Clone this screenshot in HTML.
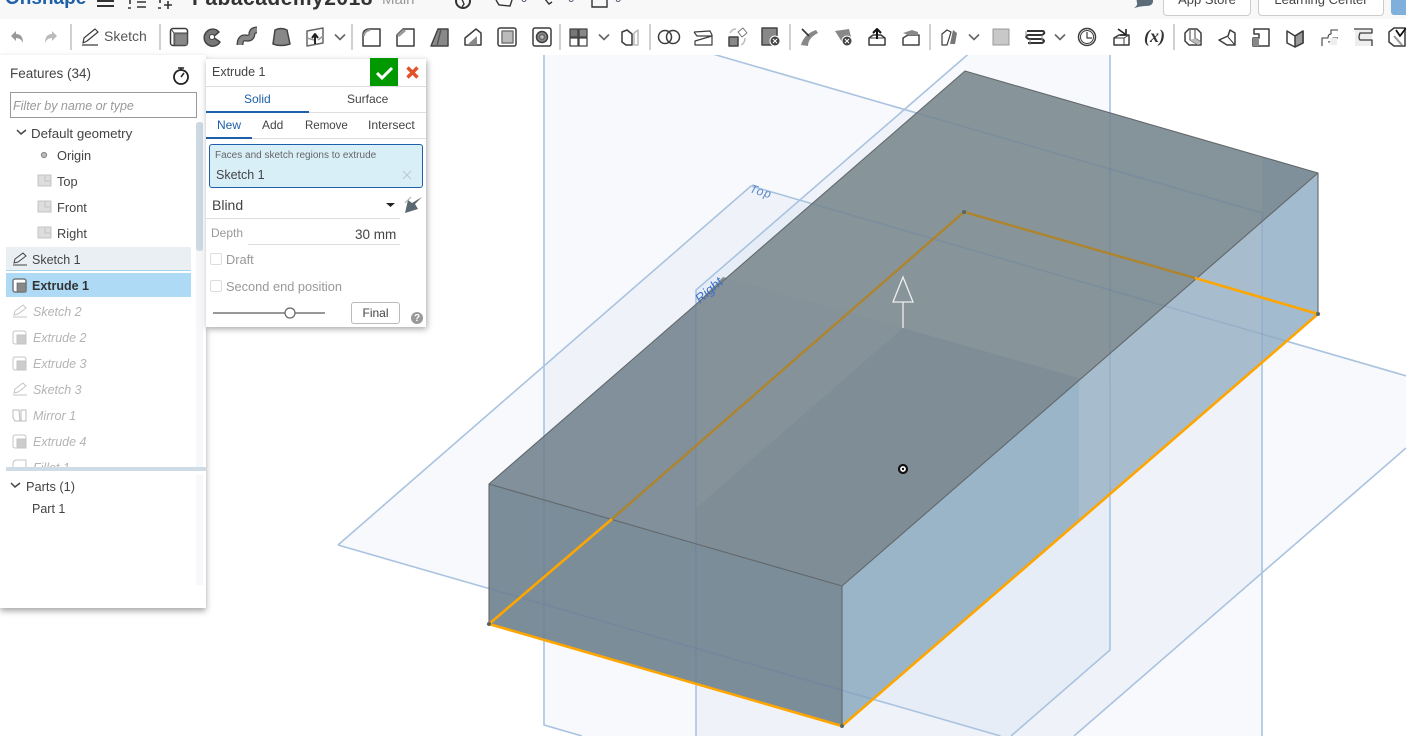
<!DOCTYPE html>
<html><head><meta charset="utf-8"><style>
html,body{margin:0;padding:0;width:1406px;height:736px;overflow:hidden;background:#fff;font-family:"Liberation Sans",sans-serif;color:#444}
#r{position:absolute;left:0;top:0;width:1406px;height:736px;overflow:hidden}
.a{position:absolute;white-space:nowrap;line-height:16px}
.g{color:#b4b4b4;font-style:italic}
svg{position:absolute;left:0;top:0;overflow:hidden}
</style></head><body><div id="r">
<svg width="1406" height="736" viewBox="0 0 1406 736">
<defs>
<clipPath id="box"><path d="M489 484L965 71L1318 173V314L842 726L489 624Z"/></clipPath>
<g id="pe"><path d="M338 545L751 186L1406 375.800M338 545L1000.500 736M1074 736L1406 448"/><path d="M544 50V725L582 736M699 50L1262 213V736"/><path d="M696 736V290L973 50M1110 50V650L1011 736"/></g>
</defs>
<g fill="#6e96c8" fill-opacity=".055">
<path d="M751 186L338 545L1000.500 736H1074L1406 448V375.800Z"/>
<path d="M544 50H699L1262 213V736H582L544 725Z"/>
<path d="M696 290L973 50H1110V650L1011 736H696Z"/>
</g>
<use href="#pe" fill="none" stroke="#a9c3e0" stroke-width="1.600"/>
<path d="M489 484L965 71L1318 173L842 586Z" fill="#87949a"/>
<path d="M489 484L842 586V726L489 624Z" fill="#7c8d9a"/>
<path d="M842 586L1318 173V314L842 726Z" fill="#9ab4c8"/>
<path d="M489 484L696 304V544Z" fill="#81909a"/>
<path d="M696 304L723 277L903 328L696 508Z" fill="#85929a"/>
<path d="M903 328L1079 378V380L842 586L696 544V508Z" fill="#7f8d96"/>
<path d="M1110 113L1262 157V228L1110 353Z" fill="#85939a"/>
<path d="M1262 157L1318 173L1262 222Z" fill="#80909b"/>
<path d="M1079 380L1318 173V314L1079 520Z" fill="#a7bdce"/>
<path d="M1262 222L1318 173V314L1262 363Z" fill="#a3bbce"/>
<g clip-path="url(#box)"><use href="#pe" fill="none" stroke="#3c6ca6" stroke-opacity=".15" stroke-width="1.600"/></g>
<g stroke="#62686b" stroke-width="1.100" fill="none" stroke-linejoin="round">
<path d="M489 624V484L965 71L1318 173V314M489 484L842 586L1318 173M842 586V726"/>
</g>
<path d="M612 519L964 212L1195 278" fill="none" stroke="#ae842c" stroke-width="2.400"/>
<path d="M612 519L489 624L842 726L1318 314L1195 278" fill="none" stroke="#ffa500" stroke-width="2.600"/>
<circle cx="489" cy="624" r="2" fill="#566"/><circle cx="842" cy="726" r="2" fill="#566"/><circle cx="1318" cy="314" r="2" fill="#566"/><circle cx="964" cy="212" r="2" fill="#566"/>
<path d="M903 277L893 302H913ZM903 302V328" fill="none" stroke="#eee" stroke-width="1.300"/>
<circle cx="903" cy="469" r="4" fill="#fff" stroke="#111" stroke-width="2.200"/><circle cx="903" cy="469" r="1.200" fill="#111"/>
<text transform="translate(749 192) rotate(17)" font-size="12" font-style="italic" fill="#5b86c8" font-family="Liberation Sans" letter-spacing="1">Top</text>
<text transform="translate(700 304) rotate(-41)" font-size="13.500" font-style="italic" fill="#3f70c8" font-family="Liberation Sans">Right</text>
</svg>

<!-- header + toolbar -->
<div style="position:absolute;left:0;top:0;width:1406px;height:19px;background:#f8f8f8;overflow:hidden">
<div class="a" style="left:5px;top:-13px;font:bold 19px/24px 'Liberation Sans';color:#1d5fa8">Onshape</div>
<div class="a" style="left:192px;top:-14px;font:bold 21px/26px 'Liberation Sans';color:#333;letter-spacing:.5px">Fabacademy2018</div>
<div class="a" style="left:382px;top:-9px;font:15px/18px 'Liberation Sans';color:#999">Main</div>
<div class="a" style="left:1163px;top:-13px;width:86px;height:27px;background:#fff;border:1px solid #ccc;border-radius:4px;font:13px/24px 'Liberation Sans';text-align:center">App Store</div>
<div class="a" style="left:1258px;top:-13px;width:124px;height:27px;background:#fff;border:1px solid #ccc;border-radius:4px;font:13px/24px 'Liberation Sans';text-align:center">Learning Center</div>
<div class="a" style="left:1391px;top:-12px;width:20px;height:27px;background:#7fb0dc;border-radius:3px"></div>
<div class="a" style="left:521px;top:-8px;font:11px/14px 'Liberation Sans';color:#446">0</div>
<div class="a" style="left:568px;top:-8px;font:11px/14px 'Liberation Sans';color:#446">6</div>
<div class="a" style="left:615px;top:-8px;font:11px/14px 'Liberation Sans';color:#446">6</div>
<svg width="1406" height="19" fill="none" stroke="#333" stroke-width="1.400">
<path d="M97 1H114M97 6H114" stroke-width="2"/>
<path d="M130 -2V4M128 8h3M137 2H146M137 7H146" stroke-width="1.600"/>
<path d="M160 -1V3M158 8h3M168 1V9M164 5H172" stroke-width="1.600"/>
<circle cx="463" cy="1" r="7" stroke-width="2"/><path d="M461 -3L464 4L462 7"/>
<path d="M496 0L499 5L510 6L512 0"/><path d="M545 -1L549 4L552 2"/><path d="M592 0V7H607V0"/>
<path d="M1136 -4H1153V1Q1153 6 1146 6Q1141 6 1134 8Q1138 5 1137 3Z" fill="#5b6b78" stroke="none"/>
</svg>
</div>
<div style="position:absolute;left:0;top:19px;width:1406px;height:36px;background:#fff"></div>

<svg width="1406" height="60" viewBox="0 0 1406 60" fill="none" stroke="#3c3c3c" stroke-width="1.500" stroke-linejoin="round">
<defs>
<g id="chev"><path d="M-5 -2.500L0 2.500L5 -2.500" stroke="#666" stroke-width="1.600"/></g>
<g id="ext"><rect x="-8.500" y="-8.500" width="17" height="17" rx="2.500" fill="#fff"/><path d="M-8 -8L-5 -4H8M-5 -4V8" stroke-width="1"/><rect x="-4" y="-3" width="12" height="11" fill="#888" stroke="#666" stroke-width=".8"/></g>
</defs>
<path d="M71 24V50M160 24V50M352 24V50M560 24V50M650 24V50M790 24V50M930 24V50M1174 24V50" stroke="#d0d0d0" stroke-width="2"/>
<path d="M11 36L16 31V34Q23 34 23 43Q21 38 16 38V41Z" fill="#999" stroke="none"/>
<path d="M57 36L52 31V34Q45 34 45 43Q47 38 52 38V41Z" fill="#bbb" stroke="none"/>
<path d="M82 45H98M83 43L84 38L95 29L98 32L87 41Z" stroke-width="1.200"/>
<use href="#ext" x="179" y="37"/>
<path d="M219 32A8.500 8.500 0 1 0 220 42L213 37Z" fill="#777" stroke="#444"/><circle cx="212" cy="37" r="2.500" fill="#fff" stroke="#444" stroke-width="1"/>
<path d="M240 45Q240 37 246 38Q252 39 252 33Q253 30 257 30" stroke="#444" stroke-width="7"/><path d="M240 45Q240 37 246 38Q252 39 252 33Q253 30 257 30" stroke="#888" stroke-width="4.400"/>
<path d="M275 30Q281 27 287 30L290 44Q281 47 273 44Z" fill="#888" stroke="#444"/>
<path d="M307 31L323 28V43L307 46Z" fill="#fff" stroke="#666"/><path d="M307 38L314 40M323 36L318 40" stroke="#999"/><path d="M315 44V35M312 38L315 34L318 38" stroke="#222" stroke-width="2"/>
<use href="#chev" x="340" y="37"/>
<path d="M363 46V35Q363 29 370 29H380V46Z" fill="#fff"/><path d="M364 36Q364 31 370 30" stroke="#999" stroke-width="2"/>
<path d="M397 46V35L403 29H414V46Z" fill="#fff"/><path d="M397 35L403 29L406 31L399 37Z" fill="#999" stroke="none"/>
<path d="M431 46L438 29H448V46Z" fill="#888" stroke="#444"/><path d="M437 46L441 29" stroke="#555"/>
<path d="M465 45V38L476 29L481 33V45Z" fill="#fff"/><path d="M467 45L477 36V45Z" fill="#888" stroke="none"/>
<rect x="498" y="28" width="18" height="18" rx="2" fill="#fff"/><rect x="502" y="31" width="11" height="12" fill="#bbb" stroke="#777"/>
<rect x="533" y="28" width="18" height="18" rx="2" fill="#fff"/><circle cx="542" cy="37" r="5.500" fill="#888"/><circle cx="542" cy="37" r="2.500" fill="#bbb" stroke="#666"/>
<g stroke="#444" stroke-width="1.300"><rect x="570" y="29" width="8" height="8" fill="#777"/><rect x="579" y="29" width="8" height="8" fill="#888"/><rect x="570" y="38" width="8" height="8" fill="#fff"/><rect x="579" y="38" width="8" height="8" fill="#fff"/></g>
<use href="#chev" x="604" y="37"/>
<path d="M622 32L627 30L632 34V45H626L622 42Z" fill="#fff"/><path d="M634 33L638 30V45H634Z" stroke="#bbb" fill="#fff"/>
<circle cx="665" cy="37" r="6.500"/><circle cx="673" cy="37" r="6.500"/>
<path d="M694 32L710 31L712 35V45H695V41L712 36M694 32L697 36H712" stroke-width="1.200"/>
<rect x="729" y="37" width="9" height="9" fill="#888" stroke="#444"/><path d="M738 32L743 28L747 33L742 37Z" fill="#fff" stroke="#777" stroke-width="1"/><path d="M730 33Q732 29 736 29M745 38Q745 43 741 45" stroke="#bbb"/>
<rect x="762" y="28" width="15" height="17" fill="#888" stroke="#444"/><circle cx="775" cy="41" r="5" fill="#444" stroke="#fff" stroke-width="1"/><path d="M773 39L777 43M777 39L773 43" stroke="#fff" stroke-width="1.100"/>
<path d="M801 45Q804 34 816 30L818 33Q808 38 808 46Z" fill="#888" stroke="none"/><path d="M802 29L809 36" stroke="#333" stroke-width="1.600"/>
<path d="M835 31L849 29L851 37L842 42Z" fill="#888" stroke="none"/><circle cx="847" cy="41" r="5" fill="#444" stroke="#fff" stroke-width="1"/><path d="M845 39L849 43M849 39L845 43" stroke="#fff" stroke-width="1.100"/>
<path d="M869 38L873 35H881L885 38V45H869Z" fill="#fff"/><path d="M869 38H885" stroke-width="1"/><path d="M877 39V30M873 33L877 29L881 33" stroke="#111" stroke-width="2"/>
<path d="M903 38L908 35H919V45H903Z" fill="#fff" stroke="#444"/><path d="M903 33L912 30L918 32V35H908Z" fill="#888" stroke="none"/>
<path d="M942 45V34L947 30L951 32L947 45Z" fill="#fff" stroke-width="1.200"/><path d="M953 30L957 33L955 44H950Z" fill="#777" stroke="none"/>
<use href="#chev" x="974" y="37"/>
<rect x="993" y="29" width="16" height="16" fill="#c8c8c8" stroke="#999" stroke-width="1"/>
<path d="M1027 31H1043Q1046 33 1042 35H1028Q1024 37 1029 39H1042Q1046 41 1042 43H1028" stroke="#333" stroke-width="2"/><path d="M1026 31V36M1030 39V45M1042 35V41" stroke="#888" stroke-width="1"/>
<use href="#chev" x="1060" y="37"/>
<circle cx="1087" cy="37" r="8.500"/><circle cx="1087" cy="37" r="6.500" stroke-width="1"/><path d="M1087 32V38H1092" stroke-width="1.200"/>
<path d="M1114 38L1119 35H1129V45H1114Z" fill="#fff"/><path d="M1114 38H1124V45M1124 38L1129 35" stroke-width="1"/><path d="M1118 29L1125 34M1126 29V35H1120" stroke="#222" stroke-width="1.600"/>
<path d="M1185 33L1189 29H1197L1201 33V45H1189L1185 41Z" fill="#fff"/><path d="M1190 30V40L1198 45M1195 30V38L1201 42" stroke-width="1"/><path d="M1190 40L1195 38L1201 42L1198 45Z" fill="#bbb" stroke="none"/>
<path d="M1219 40L1228 36L1230 30L1235 33V45H1227Z" fill="#fff"/><path d="M1228 37L1235 45" stroke-width="1"/>
<path d="M1254 29H1269V46H1253V38H1259V34H1254Z" fill="#fff"/><path d="M1253 38H1259V46H1253Z" fill="#888" stroke="none"/>
<path d="M1287 31L1295 36L1303 31V43L1295 47L1287 43Z" fill="#fff"/><path d="M1295 36V47L1303 43V31Z" fill="#999"/>
<path d="M1322 46V38H1328Q1328 34 1331 34V30H1338M1328 42Q1333 42 1333 38H1338" stroke-width="1.100"/><rect x="1330" y="38" width="7" height="7" fill="#eee" stroke="none"/>
<rect x="1355" y="30" width="17" height="16" fill="#eee" stroke="none"/><path d="M1354 29H1372V33H1360Q1358 38 1360 40H1372V46" stroke-width="1.300"/>
<path d="M1389 32L1394 28H1405V46H1394L1389 42Z" fill="#fff"/><path d="M1396 30L1400 36L1406 28" stroke="#111" stroke-width="1.800"/>
<path d="M1394 36L1402 45" stroke="#999" stroke-width="2"/>
</svg>
<div class="a" style="left:104px;top:28px;font-size:14px;color:#555">Sketch</div>
<div class="a" style="left:1144px;top:28px;font:italic bold 18px/16px 'Liberation Serif';color:#333">(<i>x</i>)</div>

<!-- feature panel -->
<div style="position:absolute;left:0;top:55px;width:206px;height:553px;background:#fff;box-shadow:0 3px 6px rgba(0,0,0,.35)"></div>
<div class="a" style="left:10px;top:66px;font-size:13.500px">Features (34)</div>
<div style="position:absolute;left:10px;top:92px;width:185px;height:24px;border:1px solid #999;background:#fff"></div>
<div class="a" style="left:13px;top:98px;font-size:12.500px;font-style:italic;color:#999">Filter by name or type</div>
<div style="position:absolute;left:196px;top:122px;width:7px;height:345px;background:#f5f7f9"></div>
<div style="position:absolute;left:196px;top:122px;width:7px;height:129px;background:#ccd9e3;border-radius:3px"></div>
<div style="position:absolute;left:196px;top:475px;width:7px;height:110px;background:#f7f8fa"></div>
<div style="position:absolute;left:6px;top:247px;width:185px;height:23px;background:#eaeff3"></div>
<div style="position:absolute;left:6px;top:270px;width:185px;height:1px;background:#a6d5f0"></div>
<div style="position:absolute;left:6px;top:273px;width:185px;height:24px;background:#aedaf5"></div>
<div style="position:absolute;left:6px;top:467px;width:200px;height:4px;background:#cfdce6"></div>
<div class="a" style="left:31px;top:126px;font-size:13.300px">Default geometry</div>
<div class="a" style="left:57px;top:148px;font-size:12.800px">Origin</div>
<div class="a" style="left:57px;top:174px;font-size:12.800px">Top</div>
<div class="a" style="left:57px;top:200px;font-size:12.800px">Front</div>
<div class="a" style="left:57px;top:226px;font-size:12.800px">Right</div>
<div class="a" style="left:32px;top:252px;font-size:12.500px">Sketch 1</div>
<div class="a" style="left:32px;top:278px;font-size:12.500px;font-weight:bold;color:#333">Extrude 1</div>
<div class="a g" style="left:33px;top:304px;font-size:12.500px">Sketch 2</div>
<div class="a g" style="left:33px;top:330px;font-size:12.500px">Extrude 2</div>
<div class="a g" style="left:33px;top:356px;font-size:12.500px">Extrude 3</div>
<div class="a g" style="left:33px;top:382px;font-size:12.500px">Sketch 3</div>
<div class="a g" style="left:33px;top:408px;font-size:12.500px">Mirror 1</div>
<div class="a g" style="left:33px;top:434px;font-size:12.500px">Extrude 4</div>
<div style="position:absolute;left:0;top:457px;width:195px;height:10px;overflow:hidden"><div class="a g" style="left:33px;top:3px;font-size:12.500px">Fillet 1</div></div>
<div class="a" style="left:26px;top:479px;font-size:12.800px">Parts (1)</div>
<div class="a" style="left:32px;top:501px;font-size:12.500px">Part 1</div>

<svg width="206" height="520" viewBox="0 0 206 520" fill="none" stroke="#444" stroke-width="1.300">
<circle cx="181" cy="77" r="7" stroke-width="1.800" stroke="#222"/><path d="M178 68H184M181 68V70M181 77L184 73" stroke="#222" stroke-width="1.500"/>
<path d="M17 130L21 134L26 130" stroke-width="1.500"/>
<path d="M11 483L15 487L20 483" stroke-width="1.500"/>
<circle cx="44" cy="155" r="2.600" fill="#bbb" stroke="#888" stroke-width="1"/>
<g fill="#ddd" stroke="#c4c4c4" stroke-width="1"><path d="M38 175H51V186H38Z"/><path d="M45 175V181H51" fill="none"/><path d="M38 201H51V212H38Z"/><path d="M45 201V207H51" fill="none"/><path d="M38 227H51V238H38Z"/><path d="M45 227V233H51" fill="none"/></g>
<g stroke-width="1"><path d="M13 265H27M14 263L15 259L23 253L26 256L18 262Z"/></g>
<g><rect x="13" y="279" width="13" height="13" rx="2" fill="#fff" stroke="#666"/><rect x="17" y="283" width="9" height="9" fill="#888" stroke="#666" stroke-width=".7"/></g>
<g stroke="#c4c4c4" stroke-width="1"><path d="M13 317H27M14 315L15 311L23 305L26 308L18 314Z"/><path d="M13 395H27M14 393L15 389L23 383L26 386L18 392Z"/>
<rect x="13" y="331" width="13" height="13" rx="2" fill="#fff"/><rect x="17" y="335" width="9" height="9" fill="#ccc"/>
<rect x="13" y="357" width="13" height="13" rx="2" fill="#fff"/><rect x="17" y="361" width="9" height="9" fill="#ccc"/>
<rect x="13" y="435" width="13" height="13" rx="2" fill="#fff"/><rect x="17" y="439" width="9" height="9" fill="#ccc"/>
<path d="M13 410H19L20 421H15L13 418ZM21 410H26V421H21Z" stroke="#bbb"/><path d="M13 467V464Q13 460 17 460H26V467"/></g>
</svg>

<!-- dialog -->
<div style="position:absolute;left:206px;top:59px;width:220px;height:268px;background:#fff;box-shadow:1px 2px 6px rgba(0,0,0,.35)"></div>
<div style="position:absolute;left:206px;top:86px;width:220px;height:1px;background:#ddd"></div>
<div style="position:absolute;left:206px;top:112px;width:220px;height:1px;background:#ddd"></div>
<div style="position:absolute;left:206px;top:138px;width:220px;height:1px;background:#ddd"></div>
<div style="position:absolute;left:206px;top:111px;width:103px;height:2px;background:#1d5fa8"></div>
<div style="position:absolute;left:206px;top:137px;width:46px;height:2px;background:#1d5fa8"></div>
<div style="position:absolute;left:370px;top:58px;width:28px;height:28px;background:#009a00"></div>
<div class="a" style="left:212px;top:64px;font-size:12.500px">Extrude 1</div>
<div class="a" style="left:244px;top:91px;font-size:12px;color:#1d5fa8;font-weight:500">Solid</div>
<div class="a" style="left:347px;top:91px;font-size:12px">Surface</div>
<div class="a" style="left:217px;top:117px;font-size:12px;color:#1d5fa8">New</div>
<div class="a" style="left:262px;top:117px;font-size:12px">Add</div>
<div class="a" style="left:305px;top:118px;font-size:11.500px">Remove</div>
<div class="a" style="left:368px;top:117px;font-size:12.200px">Intersect</div>
<div style="position:absolute;left:209px;top:144px;width:212px;height:42px;background:#d9eff8;border:1px solid #1d5fa8;border-radius:3px"></div>
<div class="a" style="left:215px;top:148px;font-size:10px;color:#666">Faces and sketch regions to extrude</div>
<div class="a" style="left:216px;top:167px;font-size:12.500px">Sketch 1</div>
<div class="a" style="left:212px;top:197px;font-size:14px">Blind</div>
<div style="position:absolute;left:206px;top:218px;width:194px;height:1px;background:#ddd"></div>
<div class="a" style="left:211px;top:225px;font-size:12px;color:#999">Depth</div>
<div style="position:absolute;left:248px;top:244px;width:152px;height:1px;background:#ddd"></div>
<div class="a" style="left:355px;top:227px;font-size:13.500px">30 mm</div>
<div class="a" style="left:226px;top:252px;font-size:12.800px;color:#999">Draft</div>
<div class="a" style="left:226px;top:279px;font-size:12.800px;color:#999">Second end position</div>
<div style="position:absolute;left:210px;top:253px;width:10px;height:10px;border:1px solid #ddd;border-radius:2px"></div>
<div style="position:absolute;left:210px;top:280px;width:10px;height:10px;border:1px solid #ddd;border-radius:2px"></div>
<div class="a" style="left:351px;top:302px;width:47px;height:20px;border:1px solid #bbb;border-radius:3px;font-size:12px;line-height:20px;text-align:center">Final</div>
<svg width="430" height="335" viewBox="0 0 430 335" fill="none">
<path d="M377 73L382 78L392 68" stroke="#fff" stroke-width="3"/>
<path d="M407.500 67.500L417.500 77.500M417.500 67.500L407.500 77.500" stroke="#e2532a" stroke-width="3.400"/>
<path d="M403 171L411 179M411 171L403 179" stroke="#b9c9d2" stroke-width="1"/>
<path d="M386 203H395L390.500 207Z" fill="#222"/>
<path d="M422 197L415 204L418 209L405 213L408 200L412 203Z" fill="#5a6872"/><path d="M405 203L411 197" stroke="#aaa"/>
<path d="M213 313H325" stroke="#777" stroke-width="1.500"/>
<circle cx="290" cy="313" r="5" fill="#fff" stroke="#666" stroke-width="1.200"/>
<circle cx="417" cy="318" r="6" fill="#999"/>
</svg>
<div class="a" style="left:414px;top:311px;font-size:10px;font-weight:bold;color:#fff">?</div>
</div></body></html>
